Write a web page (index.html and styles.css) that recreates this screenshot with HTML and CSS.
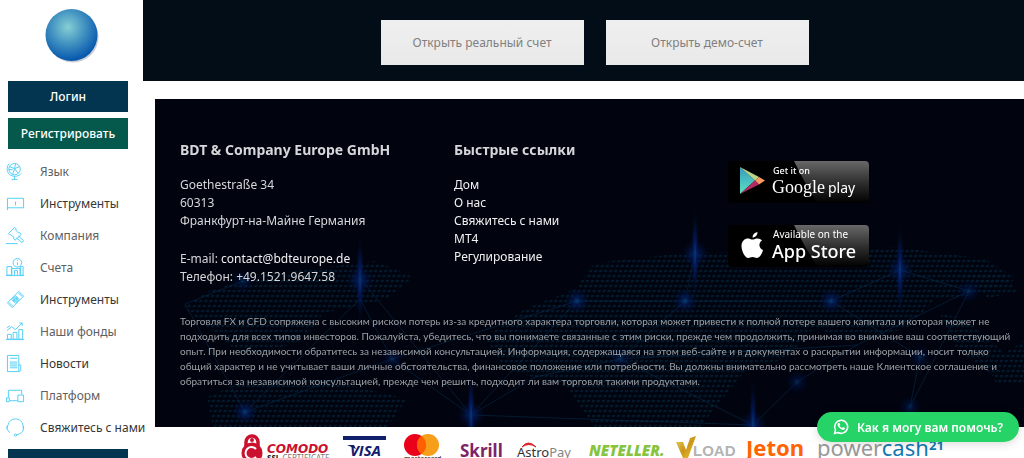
FILE: index.html
```
<!DOCTYPE html>
<html lang="ru">
<head>
	<meta charset="utf-8">
	<title>BDT &amp; Company Europe GmbH</title>
	<link rel="stylesheet" href="styles.css">
</head>
<body>
	<aside class="sidebar">
		<a class="logo" href="#" aria-label="BDT">
			<svg width="56" height="56" viewBox="0 0 56 56">
				<defs>
					<radialGradient id="ball" cx="0.43" cy="0.35" r="0.65">
						<stop offset="0" stop-color="#86cfd4"/>
						<stop offset="0.5" stop-color="#4292c1"/>
						<stop offset="1" stop-color="#0556ad"/>
					</radialGradient>
				</defs>
				<circle cx="29" cy="29" r="25.5" fill="#c9ccd2"/>
				<circle cx="27.500" cy="27" r="26" fill="url(#ball)"/>
			</svg>
		</a>
		<button class="sidebutton login">Логин</button>
		<button class="sidebutton register">Регистрировать</button>
		<nav>
			<ul class="menu">
				<li><a href="#">
					<svg viewBox="0 0 20 20"><circle cx="9" cy="7.500" r="6"/><path d="M3 2C0 6 1 12 5 14s9 1 11-2M9 15v3M6 18.500h6M4 5l5 2 1-5M9 7l-2 6M9 7l5-2M9 7l4 5M3 8l4 0"/></svg>
					Язык</a></li>
				<li class="dark"><a href="#">
					<svg viewBox="0 0 20 20"><path d="M1.500 17V4.500h17v10h-17M10 8v4"/></svg>
					Инструменты</a></li>
				<li><a href="#">
					<svg viewBox="0 0 20 20"><path d="M2.500 8L9 1.500l2 2-1 .5 3.500 3.500 1-.5 1.500 2-6.500 6-1.500-2 .5-1L4.500 9l-.5.500zM13 10.500l5.500 5-1.500 2-6-5M0 18.500h12"/></svg>
					Компания</a></li>
				<li><a href="#">
					<svg viewBox="0 0 20 20"><circle cx="12" cy="5" r="4.500"/><path d="M12 4.500v3M12 2v1M1 18V9h5v9zM6 18v-7h9v7M9 18v-5h3v5M15 18V9h3v9zM0 18.500h19"/></svg>
					Счета</a></li>
				<li class="dark"><a href="#">
					<svg viewBox="0 0 20 20"><path d="M1.500 13.500L13.500 1.500l5 5L6.500 18.500zM3 13l4 4M13 3l4 4M6 10l4-4 4 4-4 4zM7 11l5-3M8 12l5-3"/><circle cx="10" cy="10" r="2"/></svg>
					Инструменты</a></li>
				<li><a href="#">
					<svg viewBox="0 0 20 20"><path d="M1.500 18v-5h4v5zM7.500 18v-7h4v7zM13.500 18V8h4v10zM0 18.500h19M1 9l5-4 4 3 7-7M14 1h3v3M1 6l3-2"/></svg>
					Наши фонды</a></li>
				<li class="dark"><a href="#">
					<svg viewBox="0 0 20 20"><path d="M1.500 1.500h12v17h-12zM13.500 11.500h2v6l-2 1M4 4.500h8M4 8.500h8M4 10.500h8M4 12.500h8M4 14.500h8"/></svg>
					Новости</a></li>
				<li><a href="#">
					<svg viewBox="0 0 20 20"><path d="M2.500 12V4.500h14V9M4 15.500h8M.5 12.500h3v4h-3zM12.500 9.500h6v7h-6z"/></svg>
					Платформ</a></li>
				<li class="dark"><a href="#">
					<svg viewBox="0 0 20 20"><path d="M2 8C3 3 6 1 10 1s7 2 8 7M1 8.500v3l3 4M18.500 8.500v3q-1 5-7 6M1.500 8v3M18 8v3"/><circle cx="10" cy="18" r="1.200"/></svg>
					Свяжитесь с нами</a></li>
			</ul>
		</nav>
		<button class="sidebutton login" aria-label="Логин"></button>
	</aside>

	<main class="main">
		<section class="openaccount">
			<button class="openbutton">Открыть реальный счет</button>
			<button class="openbutton">Открыть демо-счет</button>
		</section>

		<footer class="footer">
			<svg class="footermap" viewBox="0 0 869 328" preserveAspectRatio="xMidYMid slice" aria-hidden="true">
				<defs>
					<pattern id="dots" width="5" height="5" patternUnits="userSpaceOnUse" patternTransform="skewX(-18)">
						<rect width="3" height="2" y="1" fill="#043350"/>
					</pattern>
					<radialGradient id="glow">
						<stop offset="0" stop-color="#07406b"/>
						<stop offset="0.3" stop-color="#031e68" stop-opacity="0.6"/>
						<stop offset="1" stop-color="#020b38" stop-opacity="0"/>
					</radialGradient>
					<g id="star">
						<circle r="14" fill="url(#glow)"/>
						<ellipse rx="4" ry="34" fill="url(#glow)"/>
						<ellipse rx="4" ry="46" fill="url(#glow)"/>
					</g>
					<circle id="node" r="13" fill="url(#glow)"/>
				</defs>
				<g fill="url(#dots)" opacity="0.55">
					<path d="M28 208L58 190 110 176 220 162 258 178 232 200 168 214 150 240 110 254 82 252 50 226z"/>
					<path d="M52 298L90 282 165 279 252 300 232 328H58z"/>
					<path d="M330 238L370 210 420 190 440 164 530 154 610 152 740 148 830 160 862 180 820 196 780 200 752 230 690 242 660 228 630 260 590 272 545 328H440L412 288 350 270z"/>
					<path d="M785 215l25 4 52 46-20 15-40-30zM805 176l44-1 14 18-30 6zM840 260l29-18v44h-29z"/>
				</g>
				<g stroke="#09345a" stroke-width="0.800" fill="none" opacity="0.6">
					<path d="M88 182L30 205 90 313 205 200 237 260 316 316 380 278 465 260 598 326 642 283 702 246 814 192 755 308"/>
					<path d="M205 179L316 316 422 202 530 202 676 202 745 171 814 192M422 202L237 260 90 313M540 155L530 202 465 260M676 202L765 258 755 308M702 246L465 260M316 316L598 326"/>
				</g>
				<use href="#star" x="205" y="181"/>
				<use href="#star" x="540" y="155"/>
				<use href="#star" x="745" y="171"/>
				<use href="#star" x="316" y="316"/>
				<use href="#star" x="598" y="326"/>
				<use href="#node" x="90" y="313"/>
				<use href="#node" x="422" y="202"/>
				<use href="#node" x="530" y="202"/>
				<use href="#node" x="676" y="202"/>
				<g opacity="0.6">
					<use href="#node" x="88" y="182"/>
					<use href="#node" x="765" y="258"/>
					<use href="#node" x="465" y="260"/>
					<use href="#node" x="814" y="192"/>
					<use href="#node" x="642" y="283"/>
					<use href="#node" x="755" y="308"/>
					<use href="#node" x="237" y="260"/>
				</g>
			</svg>

			<div class="columns">
				<div>
					<h2 class="footerheading">BDT &amp; Company Europe GmbH</h2>
					<address class="address">
						<p>Goethestraße 34<br>60313<br>Франкфурт-на-Майне Германия</p>
						<p>E-mail: <a href="mailto:contact@bdteurope.de">contact@bdteurope.de</a><br>Телефон: +49.1521.9647.58</p>
					</address>
				</div>
				<div>
					<h2 class="footerheading">Быстрые ссылки</h2>
					<ul class="quicklinks">
						<li><a href="#">Дом</a></li>
						<li><a href="#">О нас</a></li>
						<li><a href="#">Свяжитесь с нами</a></li>
						<li><a href="#">МТ4</a></li>
						<li><a href="#">Регулирование</a></li>
					</ul>
				</div>
				<div class="stores">
					<a href="#">
						<svg width="141" height="42" viewBox="0 0 141 42">
							<defs>
								<linearGradient id="shine" x1="0" y1="0" x2="0" y2="1">
									<stop offset="0" stop-color="#686868"/>
									<stop offset="0.5" stop-color="#303030"/>
									<stop offset="1" stop-color="#000"/>
								</linearGradient>
								<linearGradient id="playblue" x1="0" y1="0" x2="0" y2="1">
									<stop offset="0" stop-color="#379cc0"/>
									<stop offset="1" stop-color="#5de0c1"/>
								</linearGradient>
							</defs>
							<rect width="141" height="42" rx="4" fill="#000"/>
							<path d="M66 0H137q4 0 4 4V38q0 4-4 4H90Q79 27 66 0z" fill="url(#shine)"/>
							<path d="M12 6v27l15-13.500z" fill="url(#playblue)"/>
							<path d="M12 6l19 10-4 3.500z" fill="#b9d58b"/>
							<path d="M31 16l6 3.500-6 4-4-4z" fill="#f89b63"/>
							<path d="M12 33l15-13.500 4 4z" fill="#b42b60"/>
							<text class="storesmall" x="45" y="13">Get it on</text>
							<text class="storegoogle" x="44" y="32">Google</text>
							<text class="storeplay" x="100" y="32">play</text>
						</svg>
					</a>
					<a href="#">
						<svg width="141" height="42" viewBox="0 0 141 42">
							<rect width="141" height="42" rx="4" fill="#000"/>
							<path d="M66 0H137q4 0 4 4V38q0 4-4 4H90Q79 27 66 0z" fill="url(#shine)"/>
							<path d="M24.500 12.500c0-3 2-5 5-5.500 0 3-2 5.500-5 5.500zM34 15.500c-4 2.500-3 8 1 9.500-1 4-3.500 8-6 8-2 0-2.500-1-4.500-1s-2.500 1-4.500 1c-3 0-6.500-7-6.500-12 0-6 5-8.500 8.500-7 2 .8 3 .8 5 0 3-1 5.500 0 7 1.500z" fill="#fff"/>
							<text class="storeavailable" x="45" y="13">Available on the</text>
							<text class="storeapp" x="44" y="33">App Store</text>
						</svg>
					</a>
				</div>
			</div>
			<p class="risk">Торговля FX и CFD сопряжена с высоким риском потерь из-за кредитного характера торговли, которая может привести к полной потере вашего капитала и которая может не<br>
			подходить для всех типов инвесторов. Пожалуйста, убедитесь, что вы понимаете связанные с этим риски, прежде чем продолжить, принимая во внимание ваш соответствующий<br>
			опыт. При необходимости обратитесь за независимой консультацией. Информация, содержащаяся на этом веб-сайте и в документах о раскрытии информации, носит только<br>
			общий характер и не учитывает ваши личные обстоятельства, финансовое положение или потребности. Вы должны внимательно рассмотреть наше Клиентское соглашение и<br>
			обратиться за независимой консультацией, прежде чем решить, подходит ли вам торговля такими продуктами.</p>
		</footer>

		<div class="payments">
			<svg width="90" height="40">
				<path d="M5 16V12a6 6 0 0 1 12 0v4" fill="none" stroke="#ca1230" stroke-width="3.500"/>
				<circle cx="11" cy="10" r="2" fill="#ca1230"/>
				<circle cx="11" cy="23" r="10.500" fill="#ca1230"/>
				<path d="M15 19a6 6 0 1 0 0 8" fill="none" stroke="#fff" stroke-width="2"/>
				<text class="comodo" x="26" y="23">COMODO</text>
				<text class="ssl" x="26" y="31"><tspan class="sslbold">SSL</tspan> CERTIFICATE</text>
			</svg>
			<svg width="51" height="40">
				<path d="M4 6h43v4H4z" fill="#11206d"/>
				<text class="visa" x="11" y="26">VISA</text>
				<path d="M8 15h7l2 4z" fill="#11206d"/>
			</svg>
			<svg width="48" height="40">
				<circle cx="17" cy="15" r="11" fill="#eb001b"/>
				<circle cx="30" cy="15" r="11" fill="#f79e1b"/>
				<path d="M23.500 6a11 11 0 0 1 0 18 11 11 0 0 1 0-18z" fill="#ff5f00"/>
				<text class="mastercard" x="6" y="31">mastercard</text>
			</svg>
			<svg width="52" height="40">
				<text class="skrill" x="6" y="27">Skrill</text>
			</svg>
			<svg width="63" height="40">
				<text class="astro" x="3" y="27">Astro<tspan fill="#858585">Pay</tspan></text>
				<path d="M8 17q6-8 14 0-7-5-14 0z" fill="#d9242b" stroke="#d9242b"/>
			</svg>
			<svg width="81" height="40">
				<text class="neteller" x="4" y="26">NETELLER.</text>
			</svg>
			<svg width="60" height="40">
				<defs>
					<linearGradient id="gold" x2="1" y2="1">
						<stop offset="0" stop-color="#f0d36a"/>
						<stop offset="0.5" stop-color="#c8961a"/>
						<stop offset="1" stop-color="#f1c232"/>
					</linearGradient>
				</defs>
				<path d="M2 12h7l3 8 4-12 6-2-8 22H9z" fill="url(#gold)"/>
				<text class="vload" x="19" y="26">LOAD</text>
			</svg>
			<svg width="65" height="40">
				<text class="jeton" x="4" y="26">Jeton</text>
			</svg>
			<svg width="131" height="40">
				<text class="powercash" x="2" y="26">power<tspan fill="#1379b2">cash</tspan></text>
				<text class="powersmall" x="114" y="20">21</text>
			</svg>
		</div>
	</main>

	<a class="whatsapp" href="#">
		<svg width="16" height="16" viewBox="0 0 16 16">
			<path d="M1.500 14.500l1-3.500a6.500 6.500 0 1 1 2.500 2.500z" fill="none" stroke="#fff" stroke-width="1.500"/>
			<path d="M5.500 4q-2 1.500 0 4t4.500 3q2 0 2-2l-2-1-1 1Q7 8 6.500 6.500l.8-.8-.8-1.700z" fill="#fff"/>
		</svg>
		Как я могу вам помочь?
	</a>
</body>
</html>
```
FILE: styles.css
```
* {
	box-sizing: border-box;
}
body {
	margin: 0;
	display: flex;
	height: 100vh;
	overflow: hidden;
	background: #fff;
	font-family: "Noto Sans", "Open Sans", sans-serif;
	font-size: 12px;
}
a {
	color: inherit;
	text-decoration: none;
}
button {
	font-family: inherit;
	border: none;
	padding: 0;
	cursor: pointer;
}

/* sidebar */
.sidebar {
	flex: 0 0 143px;
	min-width: 0;
	display: flex;
	flex-direction: column;
	padding-top: 8px;
}
.logo {
	align-self: center;
	height: 56px;
	margin-bottom: 17px;
}
.sidebutton {
	flex: none;
	height: 31px;
	margin: 0 15px 6px 8px;
	color: #fff;
	font-size: 12px;
	font-weight: 500;
}
.login {
	background: #033550;
}
.register {
	background: #04594c;
}
.menu {
	list-style: none;
	margin: 0 0 6px;
	padding: 0;
}
.menu a {
	display: flex;
	align-items: center;
	height: 32px;
	padding-left: 6px;
	gap: 15px;
	white-space: nowrap;
	color: #606060;
}
.menu .dark a {
	color: #363636;
}
.menu svg {
	width: 19px;
	height: 19px;
	flex: none;
	fill: none;
	stroke: #4fcdf5;
}

/* main */
.main {
	flex: 1;
	min-width: 0;
}
.openaccount {
	display: flex;
	justify-content: center;
	gap: 22px;
	padding: 20px 0 16px 22px;
	margin-bottom: 18px;
	background: #030d17;
}
.openbutton {
	width: 203px;
	height: 45px;
	background: linear-gradient(#efefef, #e9e9e9);
	color: #808080;
	font-size: 12px;
}

/* footer */
.footer {
	position: relative;
	margin-left: 12px;
	padding: 41px 4px 38px 25px;
	background: #01040e;
	color: #d5d7da;
}
.footermap {
	position: absolute;
	top: 0;
	left: 0;
	width: 100%;
	height: 100%;
}
.columns {
	position: relative;
	display: grid;
	grid-template-columns: repeat(3, 1fr);
	margin: 0 18px 28px 0;
}
.footerheading {
	margin: 0 0 16px;
	font-size: 14px;
	line-height: 20px;
}
.address {
	font-style: normal;
	line-height: 18px;
}
.address p {
	margin: 0 0 20px;
}
.address p:last-child {
	margin: 0;
}
.address a, .quicklinks {
	color: #f0f1f2;
}
.quicklinks {
	list-style: none;
	margin: 0;
	padding: 0;
	line-height: 18px;
}
.stores {
	display: flex;
	flex-direction: column;
	gap: 22px;
	padding-top: 21px;
}
.stores a, .stores svg {
	display: block;
}
.stores text {
	fill: #fff;
}
.storesmall {
	font-size: 9px;
	font-weight: 500;
}
.storeavailable {
	font-size: 10px;
}
.storegoogle {
	font-family: "Liberation Serif", serif;
	font-size: 18px;
}
.storeplay {
	font-size: 14px;
}
.storeapp {
	font-size: 18px;
	font-weight: 500;
}
.risk {
	position: relative;
	margin: 0;
	font-family: Lato, "Noto Sans", sans-serif;
	font-size: 10px;
	line-height: 15px;
	color: #9da0a4;
}

/* payment logos */
.payments {
	display: flex;
	justify-content: center;
	gap: 8px;
	padding-top: 3px;
	margin-left: 20px;
}
.payments svg {
	flex: none;
	overflow: visible;
}
.comodo {
	font: italic bold 12px "DejaVu Sans", sans-serif;
	fill: #ca1230;
}
.ssl {
	font-size: 8px;
	fill: #777;
}
.sslbold {
	font-weight: bold;
	fill: #111;
}
.visa {
	font: italic bold 15px "Open Sans", sans-serif;
	fill: #11206d;
}
.mastercard {
	font-size: 7px;
	fill: #111;
}
.skrill {
	font: bold 17px "Noto Sans", sans-serif;
	fill: #7d2468;
}
.astro {
	font-size: 13px;
	fill: #333;
}
.neteller {
	font: italic 800 15px "Open Sans", sans-serif;
	fill: #86c440;
}
.vload {
	font: bold 15px "Liberation Sans", sans-serif;
	fill: #b3b3b3;
}
.jeton {
	font: bold 22px "Noto Sans", sans-serif;
	fill: #ff6400;
}
.powercash {
	font-size: 22px;
	fill: #999;
}
.powersmall {
	font-size: 13px;
	font-weight: bold;
	fill: #1379b2;
}

.whatsapp {
	position: fixed;
	right: 5px;
	bottom: 16px;
	display: flex;
	align-items: center;
	gap: 8px;
	height: 30px;
	padding: 0 16px;
	border-radius: 15px;
	background: #26d367;
	color: #fff;
	font-weight: 600;
	box-shadow: 0 2px 10px rgba(0, 0, 0, 0.15);
}
```
